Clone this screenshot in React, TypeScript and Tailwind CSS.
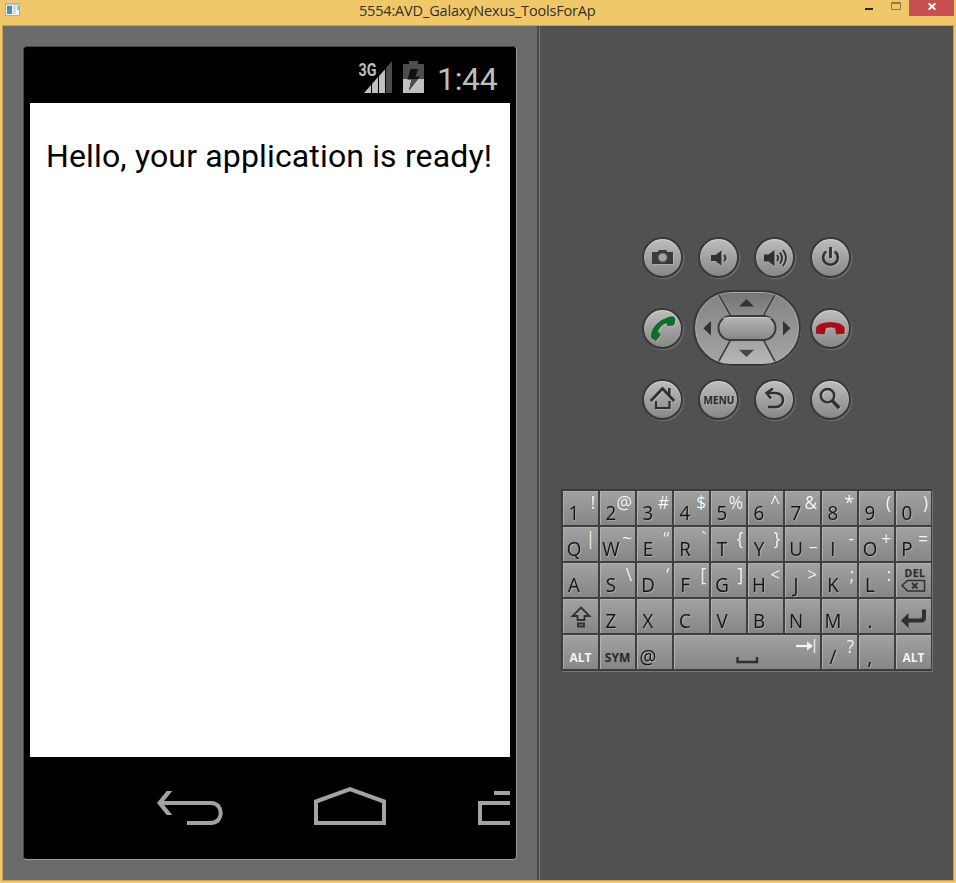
import type { ReactNode } from "react";

const INK = "#303030";

function TitleBar() {
  return (
    <header className="flex h-[25px] shrink-0 items-start">
      <svg width="15" height="13" viewBox="0 0 15 13" className="mt-[3px] ml-[5px]">
        <rect x="0.5" y="0.5" width="14" height="12" fill="#f4f4f4" stroke="#a9adb0" />
        <rect x="1" y="1" width="13" height="1.5" fill="#b7cfe6" />
        <rect x="2" y="3" width="5" height="8" fill="#4b9a8c" />
        <rect x="2" y="3" width="5" height="3" fill="#4f88a8" />
        <rect x="8" y="3" width="3" height="8" fill="#dcd8dc" />
        <rect x="12" y="3" width="2" height="4" fill="#8cc3b4" />
      </svg>
      <h1 className="ml-[339px] w-[240px] whitespace-nowrap font-['Open_Sans',sans-serif] text-[14.5px] leading-[21px] tracking-[-0.17px] text-[#33302a]">
        5554:AVD_GalaxyNexus_ToolsForAp
      </h1>
      <div className="ml-auto flex">
        <span className="mt-2 mr-[18px] h-[2px] w-2 bg-[#2a2620]" />
        <span className="mt-[2px] mr-2 h-2 w-[10px] border border-t-2 border-[#917940]" />
        <span className="mr-[2px] flex h-4 w-[45px] items-start justify-center bg-[#c75050] pt-[3px]">
          <svg width="8" height="7" viewBox="0 0 8 7">
            <path d="M0.7 0.3 7.3 6.7M7.3 0.3 0.7 6.7" stroke="#fff" strokeWidth="1.9" />
          </svg>
        </span>
      </div>
    </header>
  );
}

function StatusIcons() {
  return (
    <svg width="66" height="34" viewBox="0 0 66 34" className="shrink-0">
      <text x="0.5" y="15.5" fontFamily="Roboto" fontWeight="700" fontSize="17.5" fill="#bebebe" textLength="18" lengthAdjust="spacingAndGlyphs">
        3G
      </text>
      <path d="M6 33 13 25V33ZM14 24 20 17V33H14ZM21 16 27 9.2V33H21Z" fill="#c0c0c0" />
      <path d="M28 8 34 1V33H28Z" fill="#4b4b4b" />
      <path d="M45 4H51V1H60V4H66V33H45Z" fill="#4a4d4a" />
      <path d="M45 19H66V33H45Z" fill="#c0c0c0" />
      <path d="M52.500 9H60L57.500 16.500H62L51 30.500 53.500 19.500H49.500Z" fill="#101210" />
      <path d="M53.600 19H60L51 30.500Z" fill="#4a4d4a" />
    </svg>
  );
}

function Phone() {
  return (
    <div className="mt-5 ml-5 flex h-[814px] w-[494px] flex-col overflow-hidden rounded-[4px] border border-[#484848] border-r-[#9b9b9b] border-b-[#a0a0a0] bg-black px-[6px]">
      <div className="flex h-[56px] shrink-0 pt-[13px] pl-[328px]">
        <StatusIcons />
        <span className="ml-[13px] font-['Roboto',sans-serif] text-[32px] leading-[38px] tracking-[-0.35px] text-[#bebebe]">1:44</span>
      </div>
      <main className="h-[654px] w-[480px] shrink-0 bg-white pt-[33px] pl-4">
        <p className="whitespace-nowrap font-['Roboto',sans-serif] text-[32px] leading-[40px] tracking-[0.15px] text-black">
          Hello, your application is ready!
        </p>
      </main>
      <nav className="h-[101px]">
        <svg width="480" height="101" viewBox="30 757 480 101" fill="none" stroke="#a3a3a3" strokeWidth="4">
          <path d="M161 803H211C224 803 224 823 211 823H187" />
          <path d="M166.700 791H172.300L162.500 803 172.300 815H166.700L157 803Z" fill="#a3a3a3" stroke="none" />
          <path d="M316 823V801.500L350 789.200 384 801.500V823Z" />
          <path d="M510 803H480V823H510M494 793H510" />
        </svg>
      </nav>
    </div>
  );
}

function RoundButton({ label, children }: { label: string; children: ReactNode }) {
  return (
    <button aria-label={label} className="flex h-[41px] w-[41px] items-center justify-center rounded-full border-2 border-[#383838] bg-linear-to-b from-[#bdbdbd] to-[#888888] shadow-[1px_1px_1px_#777777,inset_0_1px_1px_#d2d2d2]">
      <svg width="41" height="41" viewBox="0 0 41 41" fill="none" stroke={INK} className="shrink-0 drop-shadow-[1px_1px_0px_rgba(255,255,255,0.22)]">
        {children}
      </svg>
    </button>
  );
}

function DPad() {
  return (
    <svg width="108" height="76" viewBox="0 0 108 76" className="overflow-visible">
      <defs>
        <linearGradient id="ring" x1="0" y1="0" x2="0" y2="1">
          <stop offset="0" stopColor="#767676" />
          <stop offset="1" stopColor="#b8b8b8" />
        </linearGradient>
        <linearGradient id="side" x1="0" y1="0" x2="0" y2="1">
          <stop offset="0" stopColor="#828282" />
          <stop offset="1" stopColor="#a6a6a6" />
        </linearGradient>
        <linearGradient id="pill" x1="0" y1="0" x2="0" y2="1">
          <stop offset="0" stopColor="#b8b8b8" />
          <stop offset="1" stopColor="#868686" />
        </linearGradient>
      </defs>
      <rect x="1.800" y="1.800" width="106" height="74" rx="37" fill="none" stroke="#777" />
      <rect x="1" y="1" width="106" height="74" rx="37" fill="url(#side)" />
      <path d="M24.500 3H83L70.500 25V50L83 73H24.500L37.500 50V25Z" fill="url(#ring)" />
      <path d="M24.500 2.500 37.500 25.500M83 2.500 70.500 25.500M37.500 50 24.500 73.500M70.500 50 83 73.500" stroke="#b0b0b0" strokeWidth="3.500" opacity=".35" />
      <path d="M24.500 2.500 37.500 25.500M83 2.500 70.500 25.500M37.500 50 24.500 73.500M70.500 50 83 73.500" stroke="#404040" strokeWidth="1.600" />
      <rect x="2.500" y="2.500" width="103" height="71" rx="35.500" fill="none" stroke="#b5b5b5" opacity=".75" />
      <rect x="1" y="1" width="106" height="74" rx="37" fill="none" stroke="#383838" strokeWidth="2" />
      <rect x="25.500" y="26" width="57" height="24" rx="12" fill="url(#pill)" stroke="#3c3c3c" strokeWidth="2" />
      <path d="M30 28.500Q33 27.500 38 27.500H70Q75 27.500 78 28.500" fill="none" stroke="#d0d0d0" />
      <path d="M46 16.500 53.500 9 61 16.500ZM18 31V45.500L10.300 38.200ZM90 31 97.500 38.200 90 45.500Z" fill="#343434" />
      <path d="M46 59.700H61L53.500 67Z" fill="#484848" />
    </svg>
  );
}

function Controls() {
  return (
    <section className="ml-[102px] w-[209px]">
      <div className="flex justify-between">
        <RoundButton label="Camera">
          <path d="M10 15H15.500L17 13H24L25.500 15H31V27H10Z" fill="#3a3a3a" stroke="none" />
          <circle cx="20.700" cy="20.500" r="4.500" fill="#a2a2a2" stroke="#5c5c5c" strokeWidth="1" />
        </RoundButton>
        <RoundButton label="Volume down">
          <path d="M13 18H17.500L23.500 13.500V28.500L17.500 24H13Z" fill={INK} stroke="none" />
          <path d="M26 18Q29 21 26 24" strokeWidth="2" />
        </RoundButton>
        <RoundButton label="Volume up">
          <path d="M10 17.500H14.500L20.500 13V29L14.500 24.500H10Z" fill={INK} stroke="none" />
          <path d="M23 18Q25.500 21 23 24M26 15.500Q30 21 26 26.500M29 13Q35 21 29 29" strokeWidth="1.900" />
        </RoundButton>
        <RoundButton label="Power">
          <path d="M16.200 14.500A7.300 7.300 0 1 0 24.800 14.500" strokeWidth="2.600" />
          <path d="M20.500 10V21" strokeWidth="2.800" />
        </RoundButton>
      </div>
      <div className="mt-3 flex items-center justify-between">
        <RoundButton label="Call">
          <path d="M24 10.500Q28.500 8 32 9.200L33 11.500 31.800 17 26 17.700 24.500 14.800Q18.500 16.500 15.500 23.500L18.300 27 14 32.500 9.500 29.700Q9 25.500 11 21.500Q15.500 13.500 24 10.500Z" fill="#087326" stroke="#145426" strokeWidth=".7" />
        </RoundButton>
        <DPad />
        <RoundButton label="End call">
          <path d="M6.500 25.500V19.500Q8.500 15 20.500 14.500Q32 15 34.200 19.500V25.500L26.500 26 25.500 20Q20.500 18 15.500 20L14.500 26Z" fill="#af0b12" stroke="#7e1518" strokeWidth=".7" />
        </RoundButton>
      </div>
      <div className="mt-[13px] flex justify-between">
        <RoundButton label="Home">
          <path d="M8.700 22 20.500 9.500 32.300 22" strokeWidth="2.600" />
          <path d="M27.300 9V16.500" strokeWidth="2.500" />
          <path d="M14 22V29H27.500V22" strokeWidth="2.200" />
        </RoundButton>
        <RoundButton label="Menu">
          <text x="5.500" y="25" fontFamily="Open Sans" fontWeight="700" fontSize="11" fill={INK} stroke={INK} strokeWidth=".25" textLength="31" lengthAdjust="spacingAndGlyphs">
            MENU
          </text>
        </RoundButton>
        <RoundButton label="Back">
          <path d="M19 9.500 12.500 14 17 19.500M13 14H21.500C31.500 14 31.500 28 21.500 28H14" strokeWidth="2.500" />
        </RoundButton>
        <RoundButton label="Search">
          <circle cx="17.500" cy="16.700" r="6.700" strokeWidth="2.400" />
          <path d="M22 21.500 29.300 29" strokeWidth="3.400" />
        </RoundButton>
      </div>
    </section>
  );
}

type KeyDef = { main?: string; alt?: string; wide?: boolean; icon?: ReactNode; word?: string; light?: boolean };

const chars = (main: string, alts: string[]): KeyDef[] => main.split("").map((c, i) => ({ main: c, alt: alts[i] }));

const shiftIcon = (
  <svg width="35" height="34" viewBox="0 0 35 34" fill="none" stroke={INK} strokeWidth="1.800">
    <path d="M18 8.500 26.500 17H21.500V21H14.500V17H9.500Z" />
    <path d="M15 24.500H21V27.500H15Z" />
  </svg>
);

const deleteIcon = (
  <svg width="35" height="34" viewBox="0 0 35 34" fill="none" stroke={INK} strokeWidth="1.500">
    <text x="8.500" y="14" fontFamily="Open Sans" fontWeight="700" fontSize="10.500" fill={INK} strokeWidth=".25" textLength="20.500">
      DEL
    </text>
    <path d="M6 22.500 11.500 17.500H28.500V28H11.500Z" />
    <path d="M16 20 21.500 25.500M21.500 20 16 25.500" strokeWidth="1.800" />
  </svg>
);

const enterIcon = (
  <svg width="35" height="34" viewBox="0 0 35 34">
    <path d="M5 21.500 12.500 14V19.500H24Q26 19.500 26 17.500V10.500H30V18.500Q30 23.500 25 23.500H12.500V29Z" fill={INK} />
  </svg>
);

const spaceIcon = (
  <svg width="146" height="34" viewBox="0 0 146 34" fill="none">
    <path d="M63.500 22V27H83V22" stroke={INK} strokeWidth="2.400" />
    <path d="M122 11H135" stroke="#f4f4f4" strokeWidth="2.200" />
    <path d="M133 6.500 139 11 133 15.500Z" fill="#f4f4f4" />
    <path d="M140.500 4V18" stroke="#e4e4e4" strokeWidth="1.500" />
  </svg>
);

const keys: KeyDef[] = [
  ...chars("1234567890", ["!", "@", "#", "$", "%", "^", "&", "*", "(", ")"]),
  ...chars("QWERTYUIOP", ["|", "~", "“", "`", "{", "}", "_", "-", "+", "="]),
  ...chars("ASDFGHJKL", ["", "\\", "‘", "[", "]", "<", ">", ";", ":"]),
  { icon: deleteIcon },
  { icon: shiftIcon },
  ...chars("ZXCVBNM.", []),
  { icon: enterIcon },
  { word: "ALT", light: true },
  { word: "SYM" },
  { main: "@" },
  { icon: spaceIcon, wide: true },
  { main: "/", alt: "?" },
  { main: "," },
  { word: "ALT", light: true },
];

function Key({ main, alt, wide, icon, word, light }: KeyDef) {
  return (
    <div
      className={`flex h-[34px] bg-linear-to-b from-[#a2a2a2] to-[#868686] font-['Open_Sans',sans-serif] shadow-[inset_1px_1px_0_#b0b0b0] ${wide ? "col-span-4" : ""}`}
    >
      {icon}
      {word && (
        <span className={`mt-[15px] w-full text-center text-[12px] leading-4 font-bold ${light ? "text-[#f4f4f4]" : "text-[#2a2a2a]"}`}>{word}</span>
      )}
      {main && (
        <span className="flex w-[22px] shrink-0 scale-x-[0.94] justify-center pt-2 text-[20px] leading-[28px] text-[#151515] [text-shadow:1px_1px_0_rgba(255,255,255,0.25)]">
          {main}
        </span>
      )}
      {alt && (
        <span className="flex w-[10px] justify-end text-[17.5px] leading-[22px] text-[#f5f5f5] [text-shadow:-1px_0_0_rgba(70,70,70,0.3)]">{alt}</span>
      )}
    </div>
  );
}

export default function App() {
  return (
    <div className="flex h-[883px] w-[956px] flex-col overflow-hidden bg-[#f0c869]">
      <TitleBar />
      <div className="mx-[2px] flex h-[856px] border border-[#c1a25a]">
        <section className="w-[534px] shrink-0 bg-[#6b6b6b]">
          <Phone />
        </section>
        <div className="w-[3px] shrink-0 border-r border-[#777777] bg-[#484848]" />
        <aside className="flex-1 bg-[#515151] pt-[211px]">
          <Controls />
          <div className="mt-[69px] ml-[21px] grid w-[371px] grid-cols-10 gap-[2px] border-2 border-r border-[#3b3b3b] bg-[#3f3f3f] shadow-[1px_1px_0_#747474]">
            {keys.map((key, i) => (
              <Key key={i} {...key} />
            ))}
          </div>
        </aside>
      </div>
    </div>
  );
}
